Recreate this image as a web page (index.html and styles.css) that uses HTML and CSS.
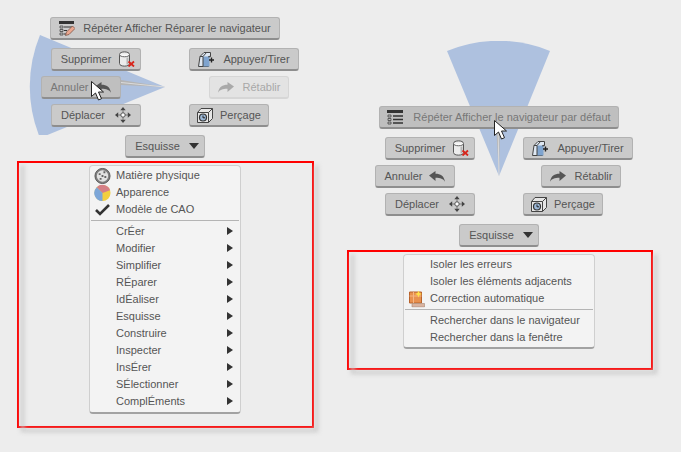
FILE: index.html
```html
<!DOCTYPE html>
<html lang="fr">
<head>
<meta charset="utf-8">
<title>Menus contextuels</title>
<link rel="stylesheet" href="styles.css">
</head>
<body>
<svg class="defs" width="0" height="0" aria-hidden="true">
  <defs>
    <symbol id="i-delete" viewBox="0 0 17 16">
      <path d="M1.500 3.500c0-3.500 10-3.500 10 0v9c0 3.500-10 3.500-10 0z" fill="#ececec" stroke="#555"/>
      <path d="M1.500 3.500c0 3 10 3 10 0" fill="#fafafa" stroke="#666"/>
      <path d="M9.500 6.500v7" stroke="#b5b5b5" stroke-width="2"/>
      <path d="M10.500 10.500l5.500 5M16 10.500l-5.500 5" stroke="#d8261c" stroke-width="1.800"/>
    </symbol>
    <symbol id="i-press" viewBox="0 0 16 15">
      <path d="M.500 14.500l1.500-10L6 .500h6.500v4l-2 1v9z" fill="#dfe8f2" stroke="#444"/>
      <path d="M5 4.500h6.500v10H5z" fill="#7fa4cf"/>
      <path d="M2 4.500h3v10M5 4.500L8.500.500" fill="none" stroke="#444"/>
      <path d="M10 5l2.500-1" stroke="#444"/>
      <path d="M11 8h5M13.500 5.500v5" stroke="#222" stroke-width="1.400"/>
    </symbol>
    <symbol id="i-undo" viewBox="0 0 16 11">
      <path d="M0 4.500L6.500 0v2.800c5 0 8.500 2 9.500 8-1.700-3-4.500-4-9.500-4V10z" fill="#555"/>
    </symbol>
    <symbol id="i-redo" viewBox="0 0 16 11">
      <path d="M16 4.500L9.500 0v2.800c-5 0-8.500 2-9.500 8 1.700-3 4.500-4 9.500-4V10z" fill="#555"/>
    </symbol>
    <symbol id="i-move" viewBox="0 0 16 16">
      <path d="M8 0l2.700 3.200H5.300zM8 16l2.700-3.200H5.300zM0 8l3.200-2.700v5.400zM16 8l-3.200-2.700v5.400z" fill="#444"/>
      <path d="M8 3v10M3 8h10" stroke="#777"/>
      <circle cx="8" cy="8" r="2.200" fill="#fff" stroke="#555"/>
    </symbol>
    <symbol id="i-hole" viewBox="0 0 16 15">
      <path d="M.500 4.500L4 .500h11.500v10l-4 4H.500z" fill="#e6e6e6" stroke="#444"/>
      <path d="M.500 4.500h11v10M11.500 4.500l4-4" fill="none" stroke="#444"/>
      <circle cx="6" cy="9.500" r="3.500" fill="#9cb8d8" stroke="#333" stroke-width="1.200"/>
      <path d="M6 7.500v2.300h2" fill="none" stroke="#222"/>
    </symbol>
    <symbol id="i-list" viewBox="0 0 16 16">
      <path d="M0 1h16v3H0z" fill="#333"/>
      <path d="M1 6h3v2H1zM1 9.500h3v2H1zM1 13h3v2H1z" fill="none" stroke="#444" stroke-width=".8"/>
      <path d="M6 7h10M6 10.500h10M6 14h10" stroke="#333" stroke-width="1.300"/>
    </symbol>
    <symbol id="i-repair" viewBox="0 0 16 16">
      <path d="M0 1h15v3H0z" fill="#333"/>
      <path d="M1 6h3v2H1zM1 9.500h3v2H1zM1 13h3v2H1z" fill="none" stroke="#444" stroke-width=".8"/>
      <path d="M5 7h9M5 10.500h3M5 14h2" stroke="#333" stroke-width="1.200"/>
      <path d="M6.500 15.500l1-3.500 6-6 2.500 2.500-6 6z" fill="#eba78f" stroke="#74493b" stroke-width=".7"/>
    </symbol>
    <symbol id="i-tri" viewBox="0 0 10 6">
      <path d="M0 0h10L5 6z" fill="#333"/>
    </symbol>
    <symbol id="i-cursor" viewBox="0 0 13 20">
      <path d="M.500.500v15l4-3.500 3 7 3-1.300-3-6.700H12.500z" fill="#fff" stroke="#222"/>
    </symbol>
  </defs>
</svg>

<main class="canvas">
  <section class="panel panel-a">
    <svg class="wedge wedge-a" width="170" height="120" viewBox="0 0 170 120" aria-hidden="true">
      <path d="M40 20A135 135 0 0 0 40 123L165 72z" fill="#aec1df"/>
      <path d="M121 65L165 72L121 70z" fill="#b4b4b4"/>
      <path d="M121 67.500L165 72" stroke="#e4e4e4" stroke-width=".8"/>
    </svg>
    <div class="row row-top">
      <button class="btn btn-wide">
        <svg class="icon" width="16" height="16"><use href="#i-repair"/></svg>
        <span>Répéter Afficher Réparer le navigateur</span>
      </button>
    </div>
    <div class="row row-outer">
      <button class="btn btn-md shift"><span>Supprimer</span><svg width="17" height="16"><use href="#i-delete"/></svg></button>
      <button class="btn btn-lg"><svg width="16" height="15"><use href="#i-press"/></svg><span>Appuyer/Tirer</span></button>
    </div>
    <div class="row row-mid">
      <button class="btn btn-sm is-hot"><span>Annuler</span><svg width="16" height="11"><use href="#i-undo"/></svg></button>
      <button class="btn btn-sm is-off gap-mid"><svg class="faded" width="16" height="11"><use href="#i-redo"/></svg><span>Rétablir</span></button>
    </div>
    <div class="row row-outer">
      <button class="btn btn-md gap-wide"><span>Déplacer</span><svg width="16" height="16"><use href="#i-move"/></svg></button>
      <button class="btn btn-sm"><svg width="16" height="15"><use href="#i-hole"/></svg><span>Perçage</span></button>
    </div>
    <div class="row row-drop">
      <button class="btn btn-sm gap-drop shift"><span>Esquisse</span><svg width="10" height="6"><use href="#i-tri"/></svg></button>
    </div>
    <div class="frame frame-a">
      <div class="menu menu-a">
        <div class="item">
          <svg class="item-icon" width="17" height="17" viewBox="0 0 18 18">
            <circle cx="9" cy="9" r="8" fill="#808080" stroke="#555"/>
            <circle cx="9" cy="9" r="6" fill="#e2e2e2"/>
            <path d="M5 6h2v2H5zM10 4h2v2h-2zM11 9h2v2h-2zM6 11h2v2H6zM8 8h2v2H8z" fill="#666"/>
          </svg>
          <span>Matière physique</span>
        </div>
        <div class="item">
          <svg class="item-icon" width="17" height="17" viewBox="0 0 18 18">
            <circle cx="9" cy="9" r="8.500" fill="#f2cf3e"/>
            <path d="M9 9L3 2.800A8.500 8.500 0 0 1 17 6z" fill="#d57f86"/>
            <path d="M9 9L3 2.800A8.500 8.500 0 0 0 9 17.500z" fill="#7ca6d8"/>
          </svg>
          <span>Apparence</span>
        </div>
        <div class="item">
          <svg class="item-icon" width="18" height="14" viewBox="0 0 18 14"><path d="M2 7l4 4 9-9" fill="none" stroke="#333" stroke-width="2.600"/></svg>
          <span>Modèle de CAO</span>
        </div>
        <hr class="sep">
        <div class="item sub"><span>CrÉer</span></div>
        <div class="item sub"><span>Modifier</span></div>
        <div class="item sub"><span>Simplifier</span></div>
        <div class="item sub"><span>RÉparer</span></div>
        <div class="item sub"><span>IdÉaliser</span></div>
        <div class="item sub"><span>Esquisse</span></div>
        <div class="item sub"><span>Construire</span></div>
        <div class="item sub"><span>Inspecter</span></div>
        <div class="item sub"><span>InsÉrer</span></div>
        <div class="item sub"><span>SÉlectionner</span></div>
        <div class="item sub"><span>ComplÉments</span></div>
      </div>
    </div>
    <svg class="cursor cursor-a" width="13" height="20" aria-hidden="true"><use href="#i-cursor"/></svg>
  </section>

  <section class="panel panel-b">
    <svg class="wedge wedge-b" width="120" height="150" viewBox="0 0 120 150" aria-hidden="true">
      <path d="M13 10A135 135 0 0 1 116 10L65 135z" fill="#aec1df"/>
      <path d="M62 84L65 135L66 84z" fill="#b4b4b4"/>
      <path d="M64 84L65 135" stroke="#e4e4e4" stroke-width=".8"/>
    </svg>
    <div class="row row-top row-top-b">
      <button class="btn btn-xwide is-hot">
        <svg class="icon" width="16" height="16"><use href="#i-list"/></svg>
        <span>Répéter Afficher le navigateur par défaut</span>
      </button>
    </div>
    <div class="row row-outer">
      <button class="btn btn-md shift"><span>Supprimer</span><svg width="17" height="16"><use href="#i-delete"/></svg></button>
      <button class="btn btn-lg"><svg width="16" height="15"><use href="#i-press"/></svg><span>Appuyer/Tirer</span></button>
    </div>
    <div class="row row-mid row-mid-b">
      <button class="btn btn-sm"><span>Annuler</span><svg width="16" height="11"><use href="#i-undo"/></svg></button>
      <button class="btn btn-sm gap-mid"><svg width="16" height="11"><use href="#i-redo"/></svg><span>Rétablir</span></button>
    </div>
    <div class="row row-outer">
      <button class="btn btn-md gap-wide"><span>Déplacer</span><svg width="16" height="16"><use href="#i-move"/></svg></button>
      <button class="btn btn-sm"><svg width="16" height="15"><use href="#i-hole"/></svg><span>Perçage</span></button>
    </div>
    <div class="row row-drop">
      <button class="btn btn-sm gap-drop shift"><span>Esquisse</span><svg width="10" height="6"><use href="#i-tri"/></svg></button>
    </div>
    <div class="frame frame-b">
      <div class="menu menu-b">
        <div class="item"><span>Isoler les erreurs</span></div>
        <div class="item"><span>Isoler les éléments adjacents</span></div>
        <div class="item">
          <svg class="item-icon item-icon-b" width="16" height="17" viewBox="0 0 16 17">
            <path d="M.500 1.500h12v11H.500z" fill="#e8904e" stroke="#b8622a"/>
            <path d="M4.500 1.500v11M.500 5.500h12" stroke="#f5b684"/>
            <path d="M9.500 0l1 2.500 2.500 1-2.500 1-1 2.500-1-2.500-2.500-1 2.500-1z" fill="#ffe14a"/>
            <path d="M3 13h12.500v3.500H3z" fill="#d9b3a0" stroke="#a58876" stroke-width=".6"/>
          </svg>
          <span>Correction automatique</span>
        </div>
        <hr class="sep">
        <div class="item"><span>Rechercher dans le navigateur</span></div>
        <div class="item"><span>Rechercher dans la fenêtre</span></div>
      </div>
    </div>
    <svg class="cursor cursor-b" width="13" height="20" aria-hidden="true"><use href="#i-cursor"/></svg>
  </section>
</main>
</body>
</html>
```

FILE: styles.css
```css
* {
  box-sizing: border-box;
}

html,
body {
  margin: 0;
  height: 100%;
}

body {
  background: #ededed;
  font-family: "Liberation Sans", Arial, sans-serif;
  font-size: 11px;
  color: #555;
  overflow: hidden;
}

.defs {
  position: absolute;
}

.canvas {
  display: flex;
  align-items: flex-start;
}

.panel {
  position: relative;
  width: 334px;
  padding-top: 17px;
  flex: none;
}

.panel-b {
  margin-top: 89px;
}

.wedge,
.cursor {
  position: absolute;
}

.wedge-a {
  left: 0;
  top: 15px;
}

.wedge-b {
  left: 100px;
  top: -48px;
}

.cursor {
  z-index: 3;
}

.cursor-a {
  left: 91px;
  top: 81px;
}

.cursor-b {
  left: 160px;
  top: 31px;
}

.row {
  position: relative;
  z-index: 1;
  display: flex;
  margin-bottom: 5px;
}

.row-top {
  padding-left: 50px;
  margin-bottom: 8px;
}

.row-top-b {
  padding-left: 45px;
}

.row-outer {
  padding-left: 51px;
  gap: 48px;
}

.row-mid {
  padding-left: 41px;
  gap: 88px;
}

.row-mid-b {
  gap: 86px;
}

.row-drop {
  padding-left: 125px;
  margin-top: 8px;
  margin-bottom: 3px;
}

.btn {
  height: 23px;
  padding: 0;
  display: flex;
  align-items: center;
  justify-content: center;
  gap: 7px;
  font: inherit;
  color: #555;
  background: #cacaca;
  border: 1px solid #b2b2b2;
  border-bottom: 2px solid #8e8e8e;
  border-radius: 3px;
}

.shift {
  padding-left: 4px;
}

.btn-sm {
  width: 80px;
}

.btn-md {
  width: 90px;
}

.btn-lg {
  width: 110px;
  gap: 9px;
}

.btn-wide {
  width: 230px;
  gap: 8px;
}

.btn-xwide {
  width: 240px;
  gap: 10px;
}

.gap-wide {
  gap: 10px;
}

.gap-mid {
  gap: 9px;
}

.gap-drop {
  gap: 9px;
}

.is-hot {
  background: #bfbfbf;
  color: #777;
}

.is-off {
  background: #e3e3e3;
  border-color: #d6d6d6;
  color: #a8a8a8;
}

.faded {
  opacity: 0.4;
}

.frame {
  position: relative;
  z-index: 1;
  border: 2px solid #f00;
  display: flex;
  padding-top: 2px;
}

.frame::before {
  content: "";
  position: absolute;
  inset: 2px -6px -6px 2px;
  border: solid #c8c8c8;
  border-width: 0 3px 3px 3px;
  filter: blur(2px);
}

.frame-a {
  margin-left: 17px;
  width: 297px;
  height: 267px;
  padding-left: 70px;
}

.frame-b {
  margin-left: 13px;
  width: 306px;
  height: 120px;
  padding-left: 54px;
}

.menu {
  position: relative;
  background: #f3f3f3;
  border: 1px solid #cfcfcf;
  border-bottom: 2px solid #a2a2a2;
  border-radius: 4px;
  padding-top: 1px;
}

.menu-a {
  width: 152px;
  height: 249px;
}

.menu-b {
  width: 192px;
  height: 95px;
}

.item {
  position: relative;
  height: 17px;
  line-height: 17px;
  padding-left: 26px;
  white-space: nowrap;
}

.item-icon {
  position: absolute;
  left: 4px;
  top: 50%;
  transform: translateY(-50%);
}

.item-icon-b {
  left: 5px;
}

.sub::after {
  content: "";
  position: absolute;
  right: 7px;
  top: 4px;
  border-left: 6px solid #333;
  border-top: 4.500px solid transparent;
  border-bottom: 4.500px solid transparent;
}

.sep {
  height: 1px;
  margin: 2px 1px;
  border: 0;
  background: #b4b4b4;
}
```
